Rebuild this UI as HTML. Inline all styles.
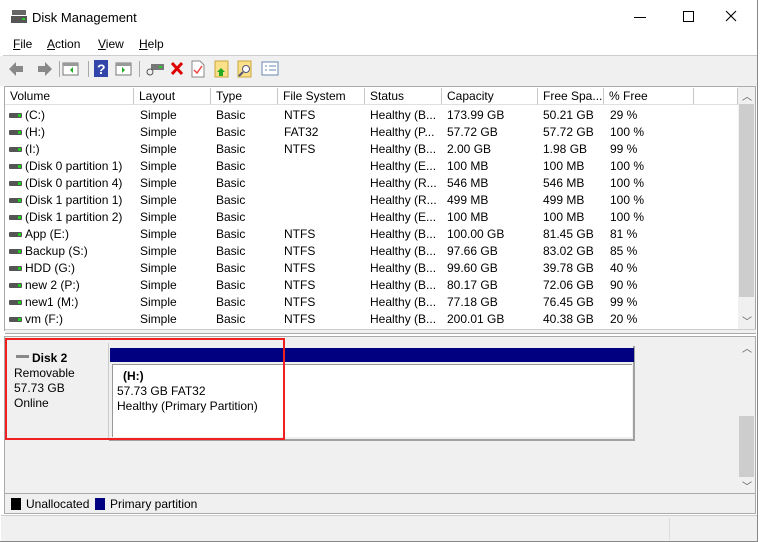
<!DOCTYPE html>
<html><head><style>
*{margin:0;padding:0;box-sizing:border-box}
body{width:760px;height:542px;background:#fff;font-family:"Liberation Sans",sans-serif;font-size:12px;color:#000;position:relative;overflow:hidden}
.a{position:absolute}
.win{left:0;top:0;width:758px;height:542px;border-right:1px solid #888;border-bottom:1px solid #888}
.hdr div{position:absolute;top:88px;height:17px;border-right:1px solid #c8c8c8;border-bottom:1px solid #e0e0e0;padding-left:5px;line-height:17px;background:#fff}
.row{position:absolute;left:7px;height:17px;line-height:17px;white-space:nowrap}
.row span{position:absolute;top:0}
.ic{display:inline-block;width:13px;height:5px;background:#555;border-radius:1px;position:absolute;left:2px;top:6px}
.ic:after{content:"";position:absolute;right:1px;top:1px;width:3px;height:3px;background:#2c2}
u{text-decoration:underline}
</style></head><body>
<div class="a win"></div>
<svg class="a" style="left:10px;top:9px" width="18" height="16" viewBox="0 0 18 16"><rect x="2" y="1" width="14" height="5" fill="#666"/><rect x="1" y="7" width="16" height="7" fill="#555"/><rect x="12" y="9" width="3" height="2" fill="#2c2"/></svg>
<div class="a" style="left:32px;top:10px;font-size:13px">Disk Management</div>
<div class="a" style="left:634px;top:17px;width:12px;height:1px;background:#000"></div>
<div class="a" style="left:683px;top:11px;width:11px;height:11px;border:1px solid #000"></div>
<svg class="a" style="left:725px;top:10px" width="12" height="12"><path d="M1 1 L11 11 M11 1 L1 11" stroke="#000" stroke-width="1.1"/></svg>
<div class="a" style="left:13px;top:37px"><u>F</u>ile</div>
<div class="a" style="left:47px;top:37px"><u>A</u>ction</div>
<div class="a" style="left:98px;top:37px"><u>V</u>iew</div>
<div class="a" style="left:139px;top:37px"><u>H</u>elp</div>
<div class="a" style="left:3px;top:55px;width:754px;height:1px;background:#ccc"></div>
<div class="a" style="left:0;top:56px;width:757px;height:30px;background:#f0f0f0"></div>
<svg class="a" style="left:6px;top:59px" width="280" height="20">
<path d="M3 10 L10 3 V7 H17 V13 H10 V17Z" fill="#888"/>
<path d="M46 10 L39 3 V7 H32 V13 H39 V17Z" fill="#888"/>
<rect x="53" y="2" width="1" height="16" fill="#aaa"/>
<rect x="57" y="4" width="15" height="12" fill="#fff" stroke="#777"/><rect x="57" y="4" width="15" height="3" fill="#999"/><path d="M67 8 L64 11 L67 14Z" fill="#2a2"/>
<rect x="82" y="2" width="1" height="16" fill="#aaa"/>
<rect x="88" y="1" width="14" height="17" fill="#3344aa"/><text x="91" y="15" fill="#fff" font-size="14" font-weight="bold" font-family="Liberation Sans">?</text>
<rect x="110" y="4" width="15" height="12" fill="#fff" stroke="#777"/><rect x="110" y="4" width="15" height="3" fill="#999"/><path d="M116 8 L119 11 L116 14Z" fill="#2a2"/>
<rect x="133" y="2" width="1" height="16" fill="#aaa"/>
<rect x="145" y="5" width="13" height="6" fill="#777"/><circle cx="144" cy="13" r="3" fill="none" stroke="#555"/><rect x="153" y="7" width="3" height="2" fill="#2c2"/>
<path d="M166 4 L176 15 M176 4 L166 15" stroke="#d00" stroke-width="3"/>
<path d="M186 2 H194 L198 6 V18 H186Z" fill="#fff" stroke="#888"/><path d="M188 11 L191 14 L196 7" stroke="#e44" stroke-width="1.5" fill="none"/>
<rect x="209" y="2" width="13" height="16" fill="#fbe08a" stroke="#c9a63c"/><path d="M215 9 L219 13 H217 V17 H213 V13 H211Z" fill="#2a2"/>
<rect x="232" y="2" width="13" height="16" fill="#fbe08a" stroke="#c9a63c"/><circle cx="240" cy="10" r="3.5" fill="#fff" stroke="#557"/><path d="M237 13 L233 17" stroke="#557" stroke-width="2"/>
<rect x="256" y="3" width="16" height="13" fill="#fff" stroke="#6a8ab0"/><path d="M259 7 h2 M259 11 h2 M263 7 h7 M263 11 h7" stroke="#6a8ab0"/>
</svg>
<div class="a" style="left:4px;top:86px;width:752px;height:245px;border:1px solid #aaa;background:#fff"></div>
<div class="hdr">
<div style="left:5px;width:129px">Volume</div>
<div style="left:134px;width:77px">Layout</div>
<div style="left:211px;width:67px">Type</div>
<div style="left:278px;width:87px">File System</div>
<div style="left:365px;width:77px">Status</div>
<div style="left:442px;width:96px">Capacity</div>
<div style="left:538px;width:66px">Free Spa...</div>
<div style="left:604px;width:90px">% Free</div>
<div style="left:694px;width:44px"></div>
</div>
<div class="a" style="left:738px;top:87px;width:17px;height:243px;background:#f0f0f0"></div>
<div class="a" style="left:739px;top:104px;width:15px;height:193px;background:#cdcdcd"></div>
<div class="a" style="left:742px;top:88px;color:#555;font-size:10px">︿</div>
<div class="a" style="left:742px;top:313px;color:#555;font-size:10px">﹀</div>
<div id="rows"></div>
<div class="a" style="left:5px;top:329px;width:751px;height:5px;background:#f0f0f0;border-top:1px solid #ccc;border-bottom:1px solid #aaa"></div>
<div class="a" style="left:4px;top:336px;width:752px;height:158px;background:#f0f0f0;border:1px solid #aaa"></div>
<div class="a" style="left:738px;top:338px;width:17px;height:155px;background:#f0f0f0"></div>
<div class="a" style="left:739px;top:416px;width:15px;height:61px;background:#cdcdcd"></div>
<div class="a" style="left:742px;top:340px;color:#555;font-size:10px">︿</div>
<div class="a" style="left:742px;top:478px;color:#555;font-size:10px">﹀</div>
<div class="a" style="left:7px;top:343px;width:102px;height:97px;background:#f0f0f0;border-right:1px solid #ccc;border-bottom:1px solid #ccc"></div>
<div class="a" style="left:16px;top:355px;width:13px;height:3px;background:#888"></div>
<div class="a" style="left:32px;top:351px;font-weight:bold">Disk 2</div>
<div class="a" style="left:14px;top:366px;line-height:15px">Removable<br>57.73 GB<br>Online</div>
<div class="a" style="left:109px;top:346px;width:526px;height:95px;border:2px solid #a0a0a0;border-top:none;border-left:none;background:#f0f0f0"></div>
<div class="a" style="left:110px;top:348px;width:524px;height:14px;background:#000080"></div>
<div class="a" style="left:112px;top:364px;width:520px;height:73px;background:#fff;border-top:1px solid #999;border-left:1px solid #999"></div>
<div class="a" style="left:123px;top:369px;font-weight:bold">(H:)</div>
<div class="a" style="left:117px;top:384px;line-height:15px">57.73 GB FAT32<br>Healthy (Primary Partition)</div>
<div class="a" style="left:5px;top:338px;width:280px;height:102px;border:2px solid #f02020"></div>
<div class="a" style="left:4px;top:494px;width:752px;height:20px;background:#f0f0f0;border:1px solid #aaa;border-top:none"></div>
<div class="a" style="left:11px;top:498px;width:10px;height:12px;background:#000"></div>
<div class="a" style="left:26px;top:497px">Unallocated</div>
<div class="a" style="left:95px;top:498px;width:10px;height:12px;background:#000080"></div>
<div class="a" style="left:110px;top:497px">Primary partition</div>
<div class="a" style="left:1px;top:515px;width:756px;height:26px;background:#f0f0f0;border-top:1px solid #ccc"></div>
<div class="a" style="left:669px;top:518px;width:1px;height:22px;background:#ddd"></div>
<script>
var d=[["(C:)","Simple","Basic","NTFS","Healthy (B...","173.99 GB","50.21 GB","29 %"],
["(H:)","Simple","Basic","FAT32","Healthy (P...","57.72 GB","57.72 GB","100 %"],
["(I:)","Simple","Basic","NTFS","Healthy (B...","2.00 GB","1.98 GB","99 %"],
["(Disk 0 partition 1)","Simple","Basic","","Healthy (E...","100 MB","100 MB","100 %"],
["(Disk 0 partition 4)","Simple","Basic","","Healthy (R...","546 MB","546 MB","100 %"],
["(Disk 1 partition 1)","Simple","Basic","","Healthy (R...","499 MB","499 MB","100 %"],
["(Disk 1 partition 2)","Simple","Basic","","Healthy (E...","100 MB","100 MB","100 %"],
["App (E:)","Simple","Basic","NTFS","Healthy (B...","100.00 GB","81.45 GB","81 %"],
["Backup (S:)","Simple","Basic","NTFS","Healthy (B...","97.66 GB","83.02 GB","85 %"],
["HDD (G:)","Simple","Basic","NTFS","Healthy (B...","99.60 GB","39.78 GB","40 %"],
["new 2 (P:)","Simple","Basic","NTFS","Healthy (B...","80.17 GB","72.06 GB","90 %"],
["new1 (M:)","Simple","Basic","NTFS","Healthy (B...","77.18 GB","76.45 GB","99 %"],
["vm (F:)","Simple","Basic","NTFS","Healthy (B...","200.01 GB","40.38 GB","20 %"]];
var x=[18,133,209,277,363,440,536,603],h="";
d.forEach(function(r,i){h+='<div class="row" style="top:'+(107+17*i)+'px"><i class="ic"></i>';
r.forEach(function(c,j){h+='<span style="left:'+x[j]+'px">'+c+'</span>'});h+='</div>'});
document.getElementById("rows").innerHTML=h;
</script>
</body></html>
